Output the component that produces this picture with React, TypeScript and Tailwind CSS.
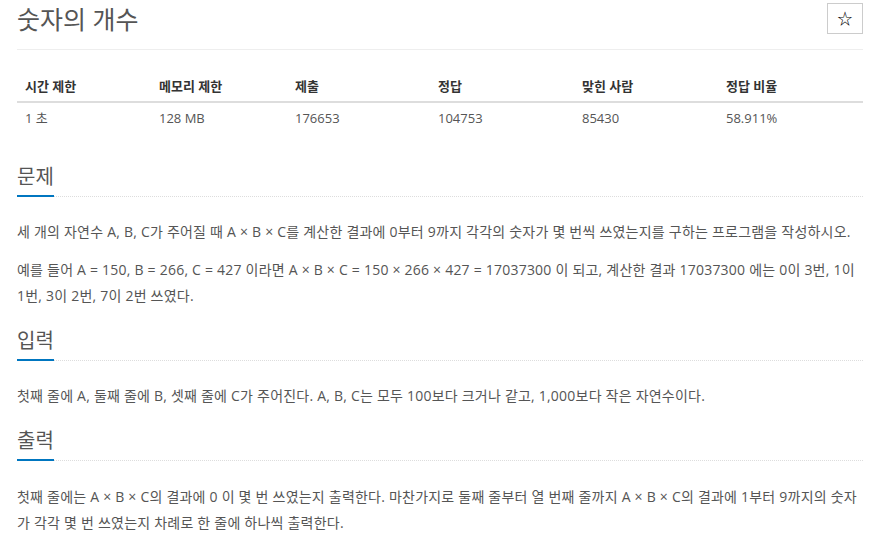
import React from 'react'

const font = { fontFamily: '"Open Sans", "Noto Sans CJK KR", sans-serif' }

const stats = [
  { label: '시간 제한', value: '1 초', w: 'w-[134px]' },
  { label: '메모리 제한', value: '128 MB', w: 'w-[136px]' },
  { label: '제출', value: '176653', w: 'w-[143px]' },
  { label: '정답', value: '104753', w: 'w-[144px]' },
  { label: '맞힌 사람', value: '85430', w: 'w-[144px]' },
  { label: '정답 비율', value: '58.911%', w: '' },
]

function SectionTitle({ children }: { children: React.ReactNode }) {
  return (
    <div className="flex items-end border-b border-dotted border-[#ddd]">
      <h2 className="-mb-px border-b-2 border-[#0076c0] pb-[3px] text-[20px] leading-[30px] text-[#555]">
        {children}
      </h2>
    </div>
  )
}

export default function App() {
  return (
    <div className="min-h-[547px] bg-white pl-[17px] pr-[20px] text-[#555]" style={font}>
      <div className="flex items-start justify-between border-b border-[#eee] pb-[10px] pt-[3px]">
        <h1 className="-mt-[2px] mb-[2px] text-[25px] leading-[36px] text-[#555]">숫자의 개수</h1>
        <button className="flex h-[31px] w-[36px] items-center justify-center border border-[#ccc] bg-white text-[15px] text-black">
          ☆
        </button>
      </div>

      <table className="mt-[19px] w-full border-collapse text-[13px]">
        <thead>
          <tr className="border-b-2 border-[#ddd]">
            {stats.map((s) => (
              <th key={s.label} className={`${s.w} px-2 pb-[6px] pt-[8px] text-left font-bold leading-[18px] text-[#333]`}>
                {s.label}
              </th>
            ))}
          </tr>
        </thead>
        <tbody>
          <tr>
            {stats.map((s) => (
              <td key={s.label} className="px-2 pb-[8px] pt-[6px] leading-[18px] text-[#555]">
                {s.value}
              </td>
            ))}
          </tr>
        </tbody>
      </table>

      <div className="mt-[27px]">
        <SectionTitle>문제</SectionTitle>
        <div className="mt-[22px] text-[14px] leading-[26px] tracking-[0.22px]">
          <p>세 개의 자연수 A, B, C가 주어질 때 A × B × C를 계산한 결과에 0부터 9까지 각각의 숫자가 몇 번씩 쓰였는지를 구하는 프로그램을 작성하시오.</p>
          <p className="mt-3">예를 들어 A = 150, B = 266, C = 427 이라면 A × B × C = 150 × 266 × 427 = 17037300 이 되고, 계산한 결과 17037300 에는 0이 3번, 1이 1번, 3이 2번, 7이 2번 쓰였다.</p>
        </div>
      </div>

      <div className="mt-[17px]">
        <SectionTitle>입력</SectionTitle>
        <div className="mt-[22px] text-[14px] leading-[26px] tracking-[0.22px]">
          <p>첫째 줄에 A, 둘째 줄에 B, 셋째 줄에 C가 주어진다. A, B, C는 모두 100보다 크거나 같고, 1,000보다 작은 자연수이다.</p>
        </div>
      </div>

      <div className="mt-[17px]">
        <SectionTitle>출력</SectionTitle>
        <div className="mt-[23px] text-[14px] leading-[26px] tracking-[0.22px]">
          <p>첫째 줄에는 A × B × C의 결과에 0 이 몇 번 쓰였는지 출력한다. 마찬가지로 둘째 줄부터 열 번째 줄까지 A × B × C의 결과에 1부터 9까지의 숫자가 각각 몇 번 쓰였는지 차례로 한 줄에 하나씩 출력한다.</p>
        </div>
      </div>
    </div>
  )
}
